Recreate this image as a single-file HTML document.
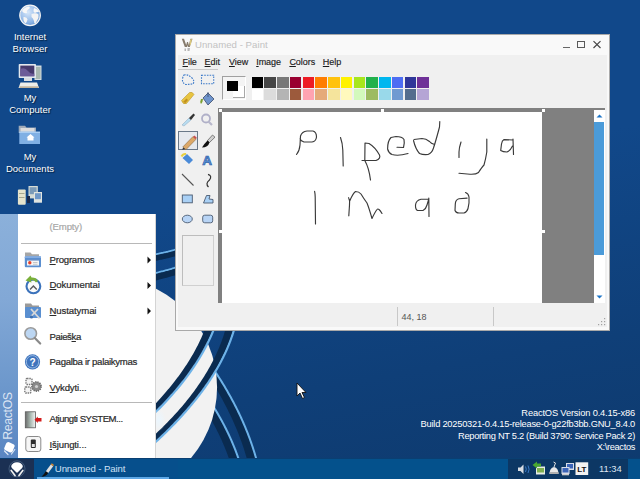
<!DOCTYPE html>
<html><head><meta charset="utf-8">
<style>
*{margin:0;padding:0;box-sizing:border-box}
html,body{width:640px;height:479px;overflow:hidden}
body{position:relative;font-family:"Liberation Sans",sans-serif;background:linear-gradient(170deg,#11488a 0%,#11488a 40%,#0f3f78 75%,#0e3a6e 100%)}
.abs{position:absolute}
.dlabel{position:absolute;color:#fff;font-size:9.5px;text-align:center;line-height:12px;text-shadow:1px 1px 1px #002040}
#paint{left:175px;top:34px;width:435px;height:297px}
#start{left:0;top:214px;width:156px;height:244px;background:#fff}
#taskbar{left:0;top:458px;width:640px;height:21px;background:#04518c;box-shadow:inset 0 1px 0 #0a3f72}
.mi{position:absolute;left:49px;font-size:9.5px;color:#222;line-height:12px}
.wtxt{position:absolute;right:5px;color:#fff;font-size:9.3px;line-height:12px;text-align:right;white-space:nowrap}
#paint .ttl{position:absolute;left:20px;top:5px;font-size:9.6px;color:#c2c2c2;white-space:nowrap;line-height:12px;letter-spacing:0.05px}
.menubar{position:absolute;left:3px;top:20.5px;width:429px;height:15px;background:#f0f0f0}
.menubar span{position:absolute;top:1.5px;font-size:9px;color:#1a1a1a;line-height:12px;white-space:nowrap;letter-spacing:-0.05px;-webkit-text-stroke:0.15px #1a1a1a}
#paint{background:#f9f9f9;box-shadow:inset 0 0 0 1px rgba(40,40,40,0.38)}
#paint .body{position:absolute;left:3px;top:20.5px;width:429px;height:272.5px;background:#f0f0f0}
.sw{position:absolute;width:11.6px;height:11.4px}
.status{position:absolute;left:3px;top:270.6px;width:428.5px;height:22.5px;background:#f0f0f0}
#start .side{position:absolute;left:0;top:0;width:17.5px;height:244px;background:linear-gradient(180deg,#8bb0da 0%,#82a8d6 35%,#6d98cc 70%,#5a86c2 100%)}
.smi{position:absolute;left:49.5px;font-size:9.6px;color:#2a2a2a;line-height:12px;white-space:nowrap;-webkit-text-stroke:0.2px currentColor}
.smi u{text-decoration-thickness:1px;text-underline-offset:1px}
.rtxt{left:-16px;top:194.3px;width:48px;height:16px;color:rgba(236,242,250,0.88);font-size:12.3px;line-height:16px;transform:rotate(-90deg);transform-origin:24px 8px;letter-spacing:-0.35px;white-space:nowrap;text-align:center}
.tbt{left:54.8px;top:4.5px;font-size:9.6px;color:#cfe2f6;letter-spacing:-0.1px;white-space:nowrap;line-height:12px}
.clk{left:599px;top:4.5px;font-size:9.4px;color:#dfe8f2;white-space:nowrap;line-height:12px}
</style></head><body>

<!-- wallpaper shapes -->
<svg id="wall" class="abs" style="left:0;top:0" width="640" height="479" viewBox="0 0 640 479">
<path d="M192.60,353.74 L193.78,355.30 L194.94,356.84 L196.09,358.38 L197.23,359.93 L198.36,361.47 L199.48,363.01 L200.59,364.55 L201.69,366.09 L202.77,367.63 L203.85,369.17 L204.91,370.71 L205.97,372.25 L207.01,373.79 L208.03,375.34 L209.03,376.89 L210.02,378.44 L210.99,380.00 L211.96,381.55 L212.91,383.10 L213.86,384.65 L214.79,386.20 L215.71,387.75 L216.62,389.30 L217.52,390.85 L218.41,392.39 L219.29,393.94 L220.15,395.49 L221.01,397.03 L221.85,398.58 L222.69,400.12 L223.51,401.67 L224.32,403.21 L225.13,404.75 L225.93,406.29 L226.72,407.82 L227.50,409.36 L228.27,410.89 L229.02,412.43 L229.77,413.96 L230.51,415.50 L231.23,417.03 L231.95,418.56 L232.65,420.09 L233.34,421.63 L234.02,423.16 L234.69,424.69 L235.35,426.22 L236.00,427.75 L236.64,429.28 L237.27,430.80 L237.89,432.33 L238.49,433.86 L239.09,435.39 L239.67,436.91 L240.24,438.44 L240.81,439.97 L241.36,441.49 L241.90,443.02 L242.43,444.54 L242.95,446.06 L243.46,447.59 L243.96,449.11 L244.45,450.63 L244.92,452.15 L245.39,453.67 L245.85,455.19 L246.29,456.71 L246.73,458.23 L247.15,459.75 L247.57,461.27 L247.98,462.78 L248.39,464.30 L248.78,465.81 L249.17,467.33 L249.54,468.84 L249.90,470.35 L250.25,471.87 L250.60,473.38 L250.93,474.92 L259.04,473.15 L258.70,471.58 L258.34,470.01 L257.98,468.45 L257.61,466.88 L257.22,465.32 L256.82,463.75 L256.41,462.18 L256.00,460.62 L255.57,459.05 L255.13,457.48 L254.67,455.92 L254.21,454.35 L253.74,452.78 L253.26,451.22 L252.76,449.65 L252.25,448.08 L251.74,446.52 L251.21,444.95 L250.67,443.38 L250.12,441.82 L249.56,440.25 L248.99,438.68 L248.41,437.12 L247.82,435.55 L247.21,433.98 L246.60,432.41 L245.97,430.85 L245.33,429.28 L244.69,427.71 L244.03,426.15 L243.36,424.58 L242.68,423.01 L241.99,421.45 L241.29,419.88 L240.57,418.31 L239.85,416.74 L239.12,415.18 L238.37,413.61 L237.61,412.04 L236.85,410.47 L236.07,408.91 L235.28,407.34 L234.48,405.77 L233.67,404.20 L232.84,402.64 L232.01,401.07 L231.17,399.50 L230.31,397.93 L229.45,396.37 L228.57,394.80 L227.68,393.23 L226.79,391.66 L225.88,390.10 L224.96,388.53 L224.03,386.96 L223.08,385.39 L222.13,383.82 L221.17,382.26 L220.19,380.69 L219.21,379.12 L218.21,377.55 L217.20,375.98 L216.18,374.42 L215.16,372.85 L214.12,371.28 L213.06,369.71 L212.00,368.14 L210.93,366.58 L209.85,365.01 L208.75,363.44 L207.64,361.87 L206.53,360.30 L205.40,358.74 L204.26,357.17 L203.11,355.60 L201.95,354.03 L200.78,352.46 L199.60,350.89 L198.41,349.32Z" fill="#0a2b50"/><path d="M198.17,349.51 L199.36,351.07 L200.54,352.64 L201.71,354.21 L202.87,355.78 L204.02,357.34 L205.16,358.91 L206.28,360.48 L207.40,362.05 L208.50,363.61 L209.60,365.18 L210.68,366.75 L211.75,368.31 L212.82,369.88 L213.87,371.45 L214.90,373.01 L215.93,374.58 L216.95,376.15 L217.96,377.71 L218.95,379.28 L219.94,380.85 L220.91,382.41 L221.87,383.98 L222.83,385.55 L223.77,387.11 L224.70,388.68 L225.62,390.25 L226.53,391.81 L227.42,393.38 L228.31,394.95 L229.19,396.51 L230.05,398.08 L230.90,399.64 L231.75,401.21 L232.58,402.78 L233.40,404.34 L234.21,405.91 L235.01,407.47 L235.80,409.04 L236.58,410.61 L237.34,412.17 L238.10,413.74 L238.84,415.30 L239.58,416.87 L240.30,418.44 L241.01,420.00 L241.71,421.57 L242.40,423.13 L243.08,424.70 L243.75,426.26 L244.41,427.83 L245.06,429.39 L245.69,430.96 L246.32,432.52 L246.93,434.09 L247.54,435.66 L248.13,437.22 L248.71,438.79 L249.28,440.35 L249.84,441.92 L250.39,443.48 L250.93,445.05 L251.45,446.61 L251.97,448.18 L252.47,449.74 L252.97,451.31 L253.45,452.87 L253.93,454.44 L254.39,456.00 L254.84,457.56 L255.28,459.13 L255.71,460.69 L256.12,462.26 L256.53,463.82 L256.93,465.39 L257.31,466.95 L257.69,468.52 L258.05,470.08 L258.41,471.65 L258.75,473.21 L260.70,472.79 L260.36,471.21 L260.00,469.63 L259.64,468.06 L259.26,466.48 L258.87,464.90 L258.47,463.33 L258.06,461.75 L257.64,460.17 L257.20,458.59 L256.76,457.02 L256.31,455.44 L255.84,453.86 L255.37,452.29 L254.88,450.71 L254.38,449.13 L253.87,447.56 L253.35,445.98 L252.82,444.40 L252.28,442.83 L251.72,441.25 L251.16,439.67 L250.59,438.10 L250.00,436.52 L249.40,434.94 L248.80,433.37 L248.18,431.79 L247.55,430.21 L246.91,428.64 L246.26,427.06 L245.59,425.48 L244.92,423.91 L244.24,422.33 L243.54,420.75 L242.84,419.18 L242.12,417.60 L241.39,416.03 L240.65,414.45 L239.90,412.87 L239.14,411.30 L238.37,409.72 L237.59,408.15 L236.79,406.57 L235.99,404.99 L235.17,403.42 L234.35,401.84 L233.51,400.27 L232.66,398.69 L231.80,397.12 L230.93,395.54 L230.05,393.97 L229.16,392.39 L228.26,390.81 L227.35,389.24 L226.42,387.66 L225.48,386.09 L224.54,384.51 L223.58,382.94 L222.61,381.36 L221.63,379.79 L220.64,378.21 L219.64,376.64 L218.63,375.06 L217.61,373.49 L216.57,371.91 L215.53,370.34 L214.47,368.76 L213.41,367.19 L212.33,365.61 L211.24,364.04 L210.14,362.46 L209.03,360.89 L207.91,359.31 L206.78,357.74 L205.64,356.17 L204.48,354.59 L203.32,353.02 L202.14,351.44 L200.95,349.87 L199.76,348.29Z" fill="#6db2e8"/><path d="M190.74,387.91 L191.56,389.05 L192.37,390.17 L193.17,391.29 L193.96,392.42 L194.75,393.54 L195.53,394.66 L196.30,395.78 L197.06,396.91 L197.82,398.03 L198.57,399.15 L199.31,400.27 L200.05,401.39 L200.78,402.51 L201.50,403.63 L202.21,404.75 L202.93,405.86 L203.64,406.98 L204.34,408.09 L205.03,409.20 L205.72,410.32 L206.40,411.43 L207.07,412.54 L207.74,413.65 L208.40,414.76 L209.05,415.87 L209.70,416.98 L210.33,418.10 L210.96,419.21 L211.59,420.31 L212.21,421.42 L212.82,422.53 L213.42,423.64 L214.02,424.75 L214.61,425.86 L215.19,426.96 L215.76,428.07 L216.33,429.18 L216.89,430.28 L217.45,431.39 L218.00,432.50 L218.54,433.60 L219.07,434.71 L219.60,435.81 L220.12,436.91 L220.63,438.02 L221.14,439.12 L221.64,440.22 L222.13,441.33 L222.61,442.43 L223.09,443.53 L223.56,444.63 L224.03,445.73 L224.49,446.83 L224.94,447.93 L225.38,449.03 L225.82,450.13 L226.25,451.23 L226.67,452.33 L227.09,453.43 L227.50,454.53 L227.90,455.63 L228.30,456.72 L228.69,457.82 L229.07,458.92 L229.44,460.01 L229.81,461.11 L230.18,462.20 L230.55,463.29 L230.91,464.38 L231.26,465.48 L231.60,466.57 L231.94,467.66 L232.27,468.75 L232.59,469.84 L232.91,470.93 L233.22,472.02 L233.52,473.11 L233.82,474.20 L234.12,475.31 L242.14,473.18 L241.83,472.04 L241.52,470.91 L241.21,469.77 L240.89,468.64 L240.56,467.50 L240.22,466.37 L239.87,465.23 L239.52,464.09 L239.17,462.96 L238.80,461.82 L238.43,460.69 L238.05,459.55 L237.66,458.42 L237.27,457.28 L236.87,456.15 L236.47,455.01 L236.05,453.87 L235.63,452.74 L235.20,451.60 L234.77,450.47 L234.33,449.33 L233.88,448.20 L233.42,447.06 L232.96,445.92 L232.49,444.79 L232.02,443.65 L231.53,442.52 L231.04,441.38 L230.54,440.24 L230.04,439.11 L229.53,437.97 L229.01,436.84 L228.48,435.70 L227.95,434.56 L227.41,433.43 L226.87,432.29 L226.31,431.16 L225.75,430.02 L225.19,428.88 L224.61,427.75 L224.03,426.61 L223.44,425.48 L222.85,424.34 L222.25,423.20 L221.64,422.07 L221.02,420.93 L220.40,419.79 L219.77,418.66 L219.13,417.52 L218.49,416.38 L217.84,415.25 L217.18,414.11 L216.51,412.98 L215.84,411.84 L215.16,410.70 L214.48,409.57 L213.78,408.43 L213.08,407.29 L212.38,406.16 L211.66,405.02 L210.94,403.88 L210.21,402.75 L209.48,401.61 L208.74,400.47 L207.99,399.34 L207.23,398.20 L206.47,397.06 L205.70,395.93 L204.92,394.79 L204.14,393.65 L203.35,392.51 L202.55,391.38 L201.74,390.24 L200.93,389.10 L200.11,387.97 L199.29,386.83 L198.46,385.69 L197.62,384.56 L196.77,383.42Z" fill="#0a2b50"/><path d="M196.53,383.60 L197.37,384.73 L198.21,385.87 L199.05,387.01 L199.87,388.14 L200.69,389.28 L201.50,390.41 L202.30,391.55 L203.10,392.69 L203.89,393.82 L204.67,394.96 L205.45,396.09 L206.22,397.23 L206.98,398.37 L207.74,399.50 L208.48,400.64 L209.23,401.77 L209.96,402.91 L210.69,404.04 L211.41,405.18 L212.12,406.31 L212.83,407.45 L213.53,408.59 L214.22,409.72 L214.90,410.86 L215.58,411.99 L216.25,413.13 L216.92,414.26 L217.58,415.40 L218.23,416.53 L218.87,417.67 L219.51,418.80 L220.13,419.94 L220.76,421.07 L221.37,422.21 L221.98,423.34 L222.58,424.48 L223.18,425.61 L223.76,426.75 L224.34,427.88 L224.92,429.02 L225.48,430.15 L226.04,431.29 L226.60,432.42 L227.14,433.56 L227.68,434.69 L228.21,435.83 L228.74,436.96 L229.26,438.10 L229.77,439.23 L230.27,440.37 L230.77,441.50 L231.26,442.63 L231.74,443.77 L232.21,444.90 L232.68,446.04 L233.15,447.17 L233.60,448.31 L234.05,449.44 L234.49,450.58 L234.92,451.71 L235.35,452.84 L235.77,453.98 L236.18,455.11 L236.59,456.25 L236.99,457.38 L237.38,458.51 L237.77,459.65 L238.14,460.78 L238.52,461.92 L238.88,463.05 L239.24,464.18 L239.59,465.32 L239.93,466.45 L240.27,467.59 L240.60,468.72 L240.92,469.85 L241.24,470.99 L241.54,472.12 L241.85,473.26 L243.78,472.74 L243.48,471.60 L243.16,470.46 L242.84,469.31 L242.52,468.17 L242.19,467.02 L241.85,465.88 L241.50,464.73 L241.15,463.59 L240.79,462.44 L240.42,461.30 L240.04,460.15 L239.66,459.01 L239.27,457.87 L238.88,456.72 L238.47,455.58 L238.06,454.43 L237.65,453.29 L237.22,452.14 L236.79,451.00 L236.36,449.86 L235.91,448.71 L235.46,447.57 L235.00,446.42 L234.53,445.28 L234.06,444.13 L233.58,442.99 L233.09,441.85 L232.60,440.70 L232.10,439.56 L231.59,438.41 L231.08,437.27 L230.56,436.13 L230.03,434.98 L229.49,433.84 L228.95,432.70 L228.40,431.55 L227.84,430.41 L227.28,429.26 L226.71,428.12 L226.13,426.98 L225.54,425.83 L224.95,424.69 L224.35,423.55 L223.75,422.40 L223.13,421.26 L222.51,420.12 L221.89,418.97 L221.25,417.83 L220.61,416.69 L219.96,415.54 L219.31,414.40 L218.65,413.26 L217.98,412.11 L217.30,410.97 L216.62,409.83 L215.93,408.68 L215.23,407.54 L214.53,406.40 L213.82,405.25 L213.10,404.11 L212.37,402.97 L211.64,401.83 L210.90,400.68 L210.16,399.54 L209.40,398.40 L208.64,397.25 L207.88,396.11 L207.10,394.97 L206.32,393.83 L205.54,392.68 L204.74,391.54 L203.94,390.40 L203.13,389.26 L202.31,388.11 L201.49,386.97 L200.66,385.83 L199.82,384.69 L198.98,383.54 L198.13,382.40Z" fill="#6db2e8"/>
<ellipse cx="103.36" cy="387.28" rx="113.7" ry="111.25" fill="#f2f2f2"/>
<path d="M218.97,306.71 L218.64,308.20 L218.29,309.70 L217.93,311.21 L217.55,312.71 L217.15,314.22 L216.74,315.72 L216.31,317.23 L215.86,318.73 L215.40,320.24 L214.92,321.74 L214.42,323.24 L213.91,324.75 L213.38,326.25 L212.83,327.75 L212.27,329.26 L211.69,330.76 L211.09,332.26 L210.46,333.75 L209.81,335.24 L209.14,336.74 L208.46,338.23 L207.76,339.72 L207.05,341.21 L206.32,342.69 L205.57,344.18 L204.80,345.67 L204.02,347.16 L203.23,348.64 L202.42,350.13 L201.59,351.61 L200.74,353.10 L199.88,354.58 L199.00,356.06 L198.11,357.54 L197.20,359.03 L196.27,360.51 L195.33,361.99 L194.37,363.47 L193.40,364.94 L192.41,366.42 L191.40,367.90 L190.38,369.38 L189.34,370.86 L188.28,372.33 L187.21,373.81 L186.12,375.28 L185.02,376.76 L183.90,378.23 L182.76,379.71 L181.61,381.18 L180.44,382.65 L179.25,384.12 L178.05,385.60 L176.84,387.07 L175.60,388.54 L174.35,390.01 L173.09,391.48 L171.80,392.95 L170.51,394.42 L169.19,395.89 L167.86,397.36 L166.52,398.82 L165.15,400.29 L163.78,401.76 L162.38,403.23 L160.97,404.69 L159.54,406.16 L158.11,407.64 L156.66,409.11 L155.20,410.59 L153.72,412.07 L152.23,413.55 L150.71,415.03 L149.19,416.50 L147.64,417.98 L146.08,419.46 L144.51,420.94 L142.91,422.41 L141.31,423.89 L143.00,425.73 L144.61,424.25 L146.21,422.76 L147.80,421.28 L149.37,419.79 L150.92,418.30 L152.46,416.82 L153.98,415.33 L155.49,413.84 L156.98,412.35 L158.45,410.86 L159.90,409.38 L161.35,407.89 L162.78,406.41 L164.21,404.94 L165.61,403.46 L167.00,401.98 L168.37,400.50 L169.73,399.02 L171.07,397.54 L172.39,396.06 L173.70,394.58 L174.99,393.10 L176.27,391.61 L177.53,390.13 L178.77,388.65 L180.00,387.16 L181.21,385.68 L182.41,384.19 L183.59,382.70 L184.75,381.22 L185.90,379.73 L187.03,378.24 L188.15,376.75 L189.24,375.26 L190.33,373.77 L191.39,372.28 L192.44,370.78 L193.48,369.29 L194.50,367.80 L195.50,366.30 L196.48,364.81 L197.45,363.31 L198.40,361.81 L199.34,360.32 L200.26,358.82 L201.17,357.32 L202.05,355.82 L202.93,354.31 L203.78,352.81 L204.62,351.31 L205.44,349.80 L206.25,348.30 L207.04,346.79 L207.81,345.28 L208.57,343.78 L209.31,342.27 L210.03,340.76 L210.74,339.25 L211.43,337.73 L212.11,336.22 L212.77,334.71 L213.41,333.19 L214.01,331.67 L214.60,330.14 L215.17,328.62 L215.73,327.09 L216.27,325.57 L216.79,324.04 L217.29,322.51 L217.78,320.99 L218.25,319.46 L218.71,317.93 L219.14,316.40 L219.56,314.87 L219.97,313.34 L220.36,311.81 L220.73,310.28 L221.08,308.74 L221.41,307.24Z" fill="#6db2e8"/><path d="M212.23,305.23 L211.91,306.68 L211.58,308.12 L211.23,309.55 L210.87,310.99 L210.49,312.42 L210.09,313.86 L209.68,315.30 L209.26,316.73 L208.81,318.17 L208.35,319.61 L207.88,321.05 L207.39,322.49 L206.88,323.92 L206.36,325.36 L205.82,326.80 L205.26,328.24 L204.69,329.68 L204.12,331.13 L203.54,332.58 L202.94,334.03 L202.32,335.48 L201.69,336.93 L201.04,338.39 L200.37,339.84 L199.69,341.29 L198.99,342.75 L198.28,344.20 L197.55,345.66 L196.80,347.12 L196.03,348.57 L195.25,350.03 L194.46,351.49 L193.64,352.95 L192.81,354.41 L191.97,355.87 L191.10,357.33 L190.22,358.79 L189.33,360.26 L188.41,361.72 L187.48,363.18 L186.54,364.65 L185.58,366.11 L184.60,367.58 L183.60,369.05 L182.59,370.51 L181.56,371.98 L180.52,373.45 L179.46,374.92 L178.38,376.38 L177.28,377.85 L176.17,379.32 L175.04,380.79 L173.90,382.26 L172.74,383.74 L171.56,385.21 L170.37,386.68 L169.16,388.15 L167.93,389.62 L166.69,391.10 L165.43,392.57 L164.15,394.05 L162.86,395.52 L161.55,397.00 L160.22,398.47 L158.88,399.95 L157.52,401.42 L156.14,402.90 L154.74,404.37 L153.32,405.83 L151.88,407.30 L150.42,408.76 L148.95,410.23 L147.46,411.69 L145.96,413.16 L144.44,414.62 L142.90,416.09 L141.34,417.56 L139.77,419.02 L138.18,420.49 L141.51,424.11 L143.12,422.63 L144.71,421.16 L146.29,419.68 L147.85,418.20 L149.40,416.72 L150.92,415.24 L152.44,413.76 L153.93,412.28 L155.41,410.80 L156.88,409.32 L158.32,407.84 L159.76,406.37 L161.19,404.90 L162.60,403.43 L164.00,401.96 L165.38,400.49 L166.74,399.03 L168.09,397.56 L169.42,396.09 L170.73,394.62 L172.03,393.14 L173.32,391.67 L174.58,390.20 L175.83,388.73 L177.07,387.26 L178.29,385.78 L179.49,384.31 L180.68,382.84 L181.85,381.36 L183.00,379.89 L184.14,378.41 L185.26,376.94 L186.36,375.46 L187.45,373.98 L188.53,372.50 L189.58,371.03 L190.62,369.55 L191.65,368.07 L192.66,366.59 L193.65,365.11 L194.63,363.63 L195.59,362.15 L196.53,360.66 L197.46,359.18 L198.37,357.70 L199.26,356.21 L200.14,354.73 L201.00,353.24 L201.85,351.76 L202.68,350.27 L203.49,348.78 L204.29,347.29 L205.07,345.80 L205.84,344.31 L206.59,342.82 L207.32,341.33 L208.03,339.84 L208.73,338.35 L209.42,336.86 L210.08,335.36 L210.73,333.87 L211.37,332.37 L211.97,330.87 L212.55,329.36 L213.11,327.86 L213.66,326.35 L214.19,324.85 L214.70,323.34 L215.20,321.83 L215.68,320.33 L216.15,318.82 L216.59,317.31 L217.03,315.80 L217.44,314.30 L217.84,312.79 L218.22,311.28 L218.58,309.77 L218.93,308.26 L219.26,306.77Z" fill="#0a2b50"/><path d="M237.26,306.41 L237.02,308.28 L236.76,310.17 L236.47,312.06 L236.16,313.94 L235.82,315.83 L235.45,317.72 L235.06,319.61 L234.65,321.49 L234.21,323.38 L233.74,325.27 L233.25,327.15 L232.74,329.04 L232.20,330.92 L231.62,332.80 L231.00,334.68 L230.36,336.55 L229.69,338.43 L229.00,340.30 L228.28,342.17 L227.54,344.04 L226.77,345.91 L225.98,347.78 L225.16,349.65 L224.32,351.51 L223.45,353.38 L222.56,355.24 L221.65,357.10 L220.71,358.97 L219.74,360.83 L218.75,362.69 L217.74,364.55 L216.70,366.40 L215.63,368.26 L214.54,370.12 L213.43,371.97 L212.29,373.83 L211.13,375.68 L209.94,377.53 L208.73,379.39 L207.49,381.24 L206.23,383.09 L204.94,384.94 L203.63,386.79 L202.30,388.63 L200.94,390.48 L199.56,392.33 L198.15,394.17 L196.71,396.02 L195.26,397.86 L193.77,399.71 L192.27,401.55 L190.74,403.39 L189.18,405.23 L187.61,407.08 L186.02,408.94 L184.41,410.79 L182.77,412.65 L181.11,414.50 L179.42,416.36 L177.71,418.21 L175.98,420.06 L174.22,421.92 L172.43,423.77 L170.62,425.62 L168.79,427.48 L166.93,429.33 L165.04,431.18 L163.13,433.03 L161.20,434.88 L159.24,436.74 L157.26,438.59 L155.25,440.44 L153.22,442.29 L151.16,444.14 L149.08,445.99 L146.98,447.84 L144.85,449.70 L142.69,451.55 L140.52,453.40 L142.14,455.30 L144.32,453.45 L146.48,451.59 L148.62,449.72 L150.74,447.86 L152.83,446.00 L154.90,444.14 L156.94,442.28 L158.96,440.42 L160.96,438.55 L162.93,436.69 L164.87,434.83 L166.79,432.97 L168.69,431.10 L170.56,429.24 L172.41,427.37 L174.23,425.51 L176.03,423.64 L177.80,421.77 L179.55,419.91 L181.27,418.04 L182.97,416.17 L184.64,414.30 L186.29,412.43 L187.92,410.56 L189.52,408.69 L191.10,406.83 L192.67,404.98 L194.22,403.12 L195.73,401.26 L197.23,399.40 L198.70,397.54 L200.15,395.67 L201.57,393.81 L202.96,391.95 L204.34,390.08 L205.68,388.22 L207.01,386.35 L208.31,384.48 L209.58,382.61 L210.83,380.74 L212.06,378.87 L213.26,376.99 L214.43,375.12 L215.58,373.24 L216.71,371.37 L217.81,369.49 L218.89,367.61 L219.94,365.73 L220.97,363.84 L221.97,361.96 L222.95,360.08 L223.90,358.19 L224.83,356.30 L225.73,354.41 L226.61,352.52 L227.46,350.63 L228.29,348.74 L229.09,346.84 L229.87,344.95 L230.62,343.05 L231.35,341.15 L232.05,339.25 L232.73,337.35 L233.38,335.44 L234.01,333.54 L234.60,331.63 L235.15,329.71 L235.67,327.80 L236.17,325.88 L236.64,323.96 L237.09,322.05 L237.51,320.13 L237.91,318.21 L238.28,316.29 L238.62,314.37 L238.94,312.45 L239.23,310.53 L239.50,308.61 L239.74,306.72Z" fill="#6db2e8"/><path d="M230.41,305.55 L230.18,307.37 L229.93,309.17 L229.66,310.97 L229.36,312.77 L229.03,314.57 L228.69,316.37 L228.32,318.17 L227.92,319.97 L227.50,321.77 L227.06,323.57 L226.59,325.37 L226.09,327.18 L225.58,328.98 L225.05,330.78 L224.51,332.60 L223.94,334.41 L223.35,336.22 L222.74,338.04 L222.10,339.86 L221.44,341.67 L220.75,343.49 L220.03,345.31 L219.30,347.13 L218.53,348.95 L217.75,350.78 L216.93,352.60 L216.10,354.43 L215.23,356.25 L214.35,358.08 L213.43,359.91 L212.50,361.74 L211.54,363.57 L210.55,365.40 L209.54,367.23 L208.50,369.07 L207.44,370.90 L206.35,372.73 L205.24,374.57 L204.10,376.41 L202.94,378.24 L201.75,380.08 L200.54,381.92 L199.30,383.76 L198.04,385.60 L196.75,387.44 L195.44,389.29 L194.10,391.13 L192.73,392.97 L191.35,394.82 L189.93,396.66 L188.49,398.51 L187.03,400.36 L185.54,402.20 L184.02,404.05 L182.46,405.88 L180.88,407.72 L179.28,409.55 L177.64,411.38 L175.99,413.22 L174.31,415.06 L172.60,416.89 L170.87,418.73 L169.11,420.56 L167.33,422.40 L165.53,424.24 L163.69,426.07 L161.84,427.91 L159.96,429.75 L158.05,431.59 L156.12,433.43 L154.17,435.26 L152.18,437.10 L150.18,438.94 L148.15,440.78 L146.09,442.62 L144.01,444.46 L141.90,446.29 L139.77,448.13 L137.60,449.97 L140.71,453.63 L142.89,451.78 L145.04,449.92 L147.17,448.07 L149.28,446.21 L151.36,444.36 L153.42,442.51 L155.45,440.66 L157.46,438.81 L159.45,436.95 L161.41,435.10 L163.34,433.25 L165.25,431.39 L167.14,429.54 L169.00,427.69 L170.83,425.83 L172.65,423.98 L174.43,422.12 L176.19,420.27 L177.93,418.41 L179.64,416.56 L181.33,414.70 L183.00,412.84 L184.63,410.99 L186.25,409.13 L187.84,407.27 L189.41,405.43 L190.97,403.58 L192.50,401.74 L194.01,399.89 L195.49,398.05 L196.95,396.20 L198.39,394.35 L199.80,392.50 L201.18,390.66 L202.54,388.81 L203.88,386.96 L205.19,385.11 L206.48,383.25 L207.74,381.40 L208.98,379.55 L210.19,377.69 L211.38,375.84 L212.55,373.98 L213.69,372.12 L214.80,370.27 L215.89,368.41 L216.96,366.55 L218.00,364.69 L219.02,362.83 L220.01,360.96 L220.97,359.10 L221.92,357.23 L222.83,355.37 L223.73,353.50 L224.60,351.63 L225.44,349.76 L226.26,347.89 L227.05,346.02 L227.82,344.15 L228.56,342.28 L229.28,340.40 L229.97,338.53 L230.64,336.65 L231.29,334.77 L231.91,332.89 L232.49,331.01 L233.03,329.12 L233.54,327.23 L234.04,325.34 L234.50,323.45 L234.94,321.56 L235.36,319.67 L235.75,317.78 L236.11,315.89 L236.45,313.99 L236.77,312.10 L237.06,310.21 L237.32,308.32 L237.55,306.45Z" fill="#0a2b50"/>
<path d="M119.01,261.56 L120.83,261.15 L122.69,260.74 L124.58,260.32 L126.49,259.90 L128.42,259.48 L130.35,259.05 L132.29,258.62 L134.23,258.19 L136.16,257.76 L138.08,257.34 L139.97,256.92 L141.84,256.51 L143.67,256.10 L145.46,255.70 L147.21,255.31 L148.90,254.94 L150.53,254.57 L152.09,254.22 L153.58,253.88 L155.00,253.56 L156.33,253.26 L157.56,252.99 L158.69,252.74 L159.75,252.51 L160.73,252.30 L161.65,252.10 L162.52,251.92 L163.34,251.74 L164.13,251.57 L164.89,251.40 L165.64,251.23 L166.39,251.06 L167.15,250.88 L167.93,250.69 L168.75,250.49 L169.62,250.26 L170.54,250.02 L171.52,249.75 L172.59,249.45 L173.75,249.13 L174.97,248.77 L176.25,248.39 L177.58,247.99 L178.96,247.57 L180.37,247.13 L181.83,246.68 L183.31,246.21 L184.82,245.73 L186.36,245.23 L187.92,244.73 L189.49,244.22 L191.07,243.71 L192.66,243.20 L194.25,242.68 L195.84,242.16 L197.42,241.65 L199.00,241.14 L200.56,240.64 L202.10,240.15 L203.62,239.66 L204.26,241.67 L202.74,242.15 L201.20,242.64 L199.64,243.14 L198.07,243.65 L196.49,244.16 L194.90,244.68 L193.31,245.19 L191.72,245.71 L190.13,246.22 L188.56,246.73 L187.00,247.23 L185.46,247.73 L183.95,248.21 L182.46,248.68 L181.00,249.14 L179.57,249.58 L178.19,250.00 L176.85,250.40 L175.56,250.79 L174.33,251.14 L173.16,251.47 L172.08,251.77 L171.08,252.05 L170.15,252.29 L169.27,252.52 L168.44,252.73 L167.64,252.92 L166.87,253.11 L166.11,253.28 L165.34,253.45 L164.57,253.62 L163.78,253.79 L162.96,253.97 L162.09,254.15 L161.17,254.35 L160.19,254.56 L159.14,254.79 L158.01,255.04 L156.78,255.31 L155.46,255.61 L154.04,255.93 L152.55,256.27 L150.99,256.62 L149.35,256.99 L147.66,257.36 L145.92,257.75 L144.13,258.15 L142.29,258.56 L140.43,258.97 L138.53,259.39 L136.62,259.81 L134.69,260.24 L132.75,260.67 L130.81,261.10 L128.87,261.53 L126.94,261.95 L125.03,262.37 L123.15,262.79 L121.29,263.20 L119.47,263.61Z" fill="#6db2e8"/><path d="M119.40,263.32 L121.22,262.91 L123.08,262.50 L124.97,262.08 L126.88,261.66 L128.80,261.23 L130.74,260.80 L132.68,260.38 L134.62,259.95 L136.55,259.52 L138.47,259.10 L140.36,258.68 L142.23,258.26 L144.06,257.86 L145.85,257.46 L147.60,257.07 L149.29,256.69 L150.92,256.33 L152.48,255.98 L153.98,255.64 L155.39,255.32 L156.72,255.02 L157.95,254.75 L159.08,254.50 L160.13,254.27 L161.11,254.06 L162.03,253.86 L162.89,253.68 L163.72,253.50 L164.51,253.33 L165.28,253.16 L166.04,252.99 L166.80,252.81 L167.57,252.63 L168.37,252.44 L169.20,252.23 L170.07,252.00 L171.00,251.76 L172.00,251.49 L173.08,251.19 L174.24,250.86 L175.48,250.50 L176.77,250.12 L178.10,249.71 L179.49,249.29 L180.91,248.85 L182.37,248.39 L183.85,247.92 L185.37,247.44 L186.91,246.95 L188.47,246.45 L190.04,245.94 L191.62,245.42 L193.21,244.91 L194.80,244.39 L196.39,243.88 L197.98,243.36 L199.55,242.86 L201.11,242.35 L202.65,241.86 L204.17,241.38 L205.83,246.62 L204.32,247.10 L202.79,247.59 L201.24,248.09 L199.67,248.60 L198.09,249.11 L196.50,249.62 L194.91,250.14 L193.32,250.66 L191.73,251.17 L190.16,251.68 L188.59,252.18 L187.05,252.68 L185.52,253.17 L184.02,253.64 L182.54,254.10 L181.11,254.55 L179.70,254.98 L178.34,255.39 L177.02,255.78 L175.76,256.14 L174.57,256.48 L173.46,256.79 L172.43,257.07 L171.46,257.32 L170.55,257.56 L169.69,257.78 L168.86,257.98 L168.05,258.17 L167.26,258.35 L166.47,258.53 L165.68,258.70 L164.87,258.88 L164.04,259.05 L163.18,259.24 L162.26,259.43 L161.29,259.64 L160.25,259.87 L159.13,260.12 L157.92,260.39 L156.61,260.68 L155.19,261.00 L153.69,261.34 L152.12,261.69 L150.49,262.06 L148.79,262.44 L147.05,262.83 L145.25,263.23 L143.42,263.63 L141.55,264.05 L139.66,264.47 L137.74,264.89 L135.81,265.32 L133.87,265.75 L131.93,266.17 L129.99,266.60 L128.07,267.03 L126.16,267.45 L124.27,267.87 L122.42,268.28 L120.60,268.68Z" fill="#0a2b50"/><path d="M118.69,282.18 L120.51,281.68 L122.36,281.17 L124.25,280.66 L126.16,280.14 L128.09,279.62 L130.02,279.09 L131.96,278.56 L133.90,278.03 L135.83,277.51 L137.75,276.99 L139.64,276.47 L141.51,275.96 L143.34,275.47 L145.14,274.98 L146.88,274.50 L148.57,274.04 L150.21,273.60 L151.77,273.17 L153.27,272.76 L154.69,272.38 L156.02,272.01 L157.25,271.68 L158.39,271.38 L159.45,271.10 L160.43,270.85 L161.36,270.61 L162.23,270.39 L163.05,270.18 L163.85,269.97 L164.62,269.77 L165.38,269.58 L166.13,269.37 L166.90,269.17 L167.69,268.95 L168.51,268.72 L169.38,268.47 L170.30,268.20 L171.29,267.91 L172.36,267.58 L173.52,267.22 L174.75,266.84 L176.03,266.43 L177.36,266.00 L178.74,265.55 L180.16,265.09 L181.62,264.61 L183.10,264.11 L184.62,263.61 L186.16,263.09 L187.71,262.56 L189.28,262.03 L190.87,261.50 L192.46,260.96 L194.05,260.42 L195.64,259.88 L197.22,259.34 L198.80,258.81 L200.36,258.28 L201.90,257.76 L203.42,257.26 L204.08,259.25 L202.57,259.76 L201.03,260.27 L199.47,260.80 L197.89,261.33 L196.31,261.87 L194.72,262.40 L193.13,262.94 L191.54,263.48 L189.96,264.02 L188.38,264.55 L186.83,265.08 L185.29,265.60 L183.77,266.10 L182.28,266.60 L180.82,267.08 L179.40,267.55 L178.01,268.00 L176.67,268.43 L175.38,268.84 L174.14,269.23 L172.97,269.59 L171.90,269.92 L170.89,270.21 L169.96,270.49 L169.08,270.74 L168.25,270.97 L167.45,271.19 L166.67,271.40 L165.91,271.61 L165.15,271.81 L164.37,272.01 L163.58,272.21 L162.75,272.42 L161.88,272.64 L160.96,272.88 L159.98,273.14 L158.93,273.41 L157.79,273.71 L156.57,274.04 L155.24,274.40 L153.82,274.79 L152.33,275.20 L150.76,275.62 L149.13,276.07 L147.43,276.53 L145.69,277.00 L143.90,277.49 L142.06,277.99 L140.20,278.50 L138.30,279.01 L136.39,279.54 L134.45,280.06 L132.52,280.59 L130.57,281.12 L128.64,281.64 L126.71,282.17 L124.80,282.69 L122.91,283.20 L121.06,283.71 L119.24,284.20Z" fill="#6db2e8"/><path d="M119.16,283.91 L120.98,283.42 L122.84,282.91 L124.72,282.40 L126.63,281.88 L128.56,281.35 L130.50,280.83 L132.44,280.30 L134.38,279.77 L136.31,279.25 L138.22,278.72 L140.12,278.21 L141.98,277.70 L143.82,277.20 L145.61,276.71 L147.35,276.24 L149.05,275.78 L150.68,275.33 L152.25,274.91 L153.74,274.50 L155.16,274.11 L156.49,273.75 L157.71,273.42 L158.85,273.12 L159.90,272.85 L160.89,272.59 L161.81,272.35 L162.67,272.13 L163.50,271.92 L164.30,271.72 L165.07,271.52 L165.83,271.32 L166.60,271.11 L167.37,270.90 L168.17,270.68 L169.00,270.45 L169.88,270.20 L170.81,269.93 L171.81,269.63 L172.89,269.30 L174.05,268.94 L175.29,268.56 L176.58,268.15 L177.92,267.72 L179.30,267.27 L180.72,266.80 L182.18,266.32 L183.67,265.82 L185.19,265.31 L186.73,264.79 L188.29,264.27 L189.86,263.74 L191.44,263.20 L193.03,262.66 L194.63,262.12 L196.22,261.58 L197.80,261.05 L199.37,260.51 L200.93,259.99 L202.47,259.47 L203.99,258.97 L206.01,265.03 L204.50,265.54 L202.97,266.05 L201.42,266.58 L199.85,267.11 L198.27,267.64 L196.68,268.18 L195.09,268.72 L193.50,269.26 L191.91,269.80 L190.34,270.33 L188.77,270.86 L187.23,271.38 L185.70,271.89 L184.20,272.39 L182.73,272.88 L181.29,273.35 L179.89,273.80 L178.53,274.24 L177.21,274.66 L175.95,275.06 L174.76,275.42 L173.65,275.76 L172.62,276.07 L171.66,276.35 L170.75,276.61 L169.88,276.85 L169.05,277.08 L168.25,277.30 L167.46,277.51 L166.68,277.71 L165.89,277.91 L165.09,278.12 L164.26,278.33 L163.40,278.55 L162.49,278.79 L161.52,279.04 L160.48,279.31 L159.36,279.61 L158.15,279.93 L156.84,280.29 L155.43,280.67 L153.93,281.08 L152.36,281.51 L150.73,281.95 L149.04,282.41 L147.29,282.89 L145.50,283.38 L143.66,283.88 L141.80,284.38 L139.90,284.90 L137.99,285.42 L136.06,285.95 L134.12,286.47 L132.18,287.00 L130.24,287.53 L128.31,288.05 L126.40,288.57 L124.52,289.09 L122.66,289.59 L120.84,290.09Z" fill="#0a2b50"/>
<defs><radialGradient id="glw"><stop offset="0" stop-color="#eaf6ff" stop-opacity="0.95"/><stop offset="1" stop-color="#eaf6ff" stop-opacity="0"/></radialGradient></defs><ellipse cx="159" cy="420" rx="7" ry="11" fill="url(#glw)"/>
</svg>

<!-- desktop icons -->
<svg class="abs" style="left:0;top:0" width="60" height="214" viewBox="0 0 60 214">
  <defs>
    <radialGradient id="gl" cx="0.4" cy="0.35" r="0.7"><stop offset="0" stop-color="#d8e8fa"/><stop offset="0.7" stop-color="#8fb6e6"/><stop offset="1" stop-color="#6a98d0"/></radialGradient>
  </defs>
  <circle cx="30.05" cy="15.35" r="10.3" fill="url(#gl)" stroke="#f4f4f4" stroke-width="1.2"/>
  <path d="M22,11 Q24,7 29,6.5 Q31,8 28,9.5 Q26,11 27,13 Q24,14 22,11Z" fill="#f8f8f8"/>
  <path d="M34,8 Q38,9 39,12 Q36,11.5 35,13 Q33,12 33.5,10Z" fill="#f8f8f8"/>
  <path d="M31.5,14 Q36,12.5 38.5,14.5 Q39,18 37,20.5 L35.5,23.5 Q34,24 34,21 Q33,18 31.5,17Z" fill="#f4f4f4"/>
  <path d="M23.5,17 Q27,16.5 27.5,19.5 Q27,22 25.5,23.5 Q23,21 23.5,17Z" fill="#f4f4f4"/>
  <!-- computer -->
  <rect x="34.5" y="65.5" width="7" height="14.5" fill="#d4dce0"/>
  <rect x="35.5" y="67" width="5" height="12" fill="#a8b8b0"/>
  <rect x="18.7" y="64" width="17.3" height="14" rx="0.8" fill="#e2e8ee"/>
  <rect x="20.3" y="65.6" width="14" height="10.6" fill="#463a6c"/>
  <path d="M20.3,69 Q25,67 28,71 Q30.5,74.5 34.3,73.5 L34.3,76.2 L20.3,76.2Z" fill="#6c5c98"/>
  <rect x="24" y="78" width="8" height="3" fill="#d8dce0"/>
  <path d="M20.5,82.5 L37,82.5 L39,88 L18.5,88Z" fill="#eeeeea"/>
  <rect x="19.5" y="86.3" width="19" height="1.7" fill="#c4b49a"/>
  <!-- folder -->
  <path d="M18.7,125.7 L25,125.7 L26.5,127.5 L36,127.5 L36,133 L18.7,133Z" fill="#a0aab8"/>
  <rect x="20.5" y="128" width="14" height="4" fill="#dcdcdc"/>
  <rect x="19.3" y="131.7" width="20.7" height="12.3" fill="#80b0e4"/>
  <rect x="19.3" y="131.7" width="20.7" height="1.3" fill="#a9cdf2"/>
  <path d="M26.5,137.5 L30.5,134 L34.5,137.5 L33.5,137.5 L33.5,140.5 L27.5,140.5 L27.5,137.5Z" fill="#fff"/>
  <!-- network -->
  <rect x="17.9" y="189.6" width="7.8" height="15.2" rx="1" fill="#e6e4cc"/>
  <rect x="19" y="193" width="5.5" height="1" fill="#a8a890"/>
  <rect x="19" y="197" width="5.5" height="1" fill="#a8a890"/>
  <rect x="28.5" y="186" width="9.3" height="12.4" fill="#d6dcd6"/>
  <rect x="29.6" y="187.2" width="7" height="7" fill="#7a9ab8"/>
  <rect x="27" y="196" width="3" height="7" fill="#1a2a4a"/>
  <rect x="33.9" y="192" width="8.1" height="10.7" fill="#e0e4e0"/>
  <rect x="35" y="193.2" width="5.9" height="6" fill="#6f98c8"/>
</svg>
<div class="dlabel" style="left:0;top:31px;width:60px">Internet<br>Browser</div>
<div class="dlabel" style="left:0;top:91.7px;width:60px">My<br>Computer</div>
<div class="dlabel" style="left:0;top:150.7px;width:60px">My<br>Documents</div>
<div class="dlabel" style="left:0;top:211.5px;width:60px">My Network</div>

<!-- Paint window -->
<div id="paint" class="abs">
  <div class="body"></div>
  <div class="abs" style="left:3.4px;top:97.4px;width:19.6px;height:18.8px;border:1px solid #6a7888;background:#e6e9ee"></div>
  <div class="ttl">Unnamed - Paint</div>
  <svg class="abs" style="left:0;top:0" width="60" height="200" viewBox="175 34 60 200">
  <g fill="none" stroke="#3a78c8" stroke-width="1.1" stroke-dasharray="1.6 1.1">
    <path d="M184,75 Q188,74 192,78 Q195,81 193,84 L186,84.5 Q182,83 182.5,79 Q183,76 184,75Z"/>
    <rect x="201.5" y="75.2" width="12.2" height="8.5"/>
  </g>
  <path d="M181.5,100.5 L189.5,92.5 Q192.5,91.5 194,94.5 L186.5,103.5 Q183,105 181.5,100.5Z" fill="#e8c440" stroke="#b08a20" stroke-width="0.5"/>
  <path d="M183,102 L186.5,98.5 L188,100 L185.5,103Z" fill="#c09020"/>
  <path d="M203,98 L208,93 L214,99 L208,105Z" fill="#6f94cc" stroke="#3a4a6a" stroke-width="0.8"/>
  <path d="M201,99 Q199.5,102 201,104 Q203,102 203,99Z" fill="#7aa030"/>
  <path d="M208,92 L208,97" stroke="#3a4a6a" stroke-width="0.8"/>
  <path d="M182,125 L189,118 L191,120 L184,126Z" fill="#b8dcf0" stroke="#8aa8c0" stroke-width="0.5"/>
  <path d="M189,118 L193.5,113.5 L195,115 L191,120Z" fill="#333"/>
  <circle cx="206" cy="118.5" r="4" fill="none" stroke="#b0b0c8" stroke-width="1.8"/>
  <path d="M208.5,121.5 L212,125" stroke="#b8b8cc" stroke-width="2.2"/>
  <path d="M182.8,147 L193,136.5 L196,139.3 L185.8,149.8Z" fill="#dca868" stroke="#8a6a40" stroke-width="0.6"/>
  <path d="M193,137 L194.5,135.5 L197,138 L195.5,139Z" fill="#c85050"/>
  <path d="M183,147.5 L185.5,149 L182.3,149.8Z" fill="#333"/>
  <path d="M207.5,140.5 L212.5,135 L215,137.2 L209.5,142.5Z" fill="#d0d0d0" stroke="#555" stroke-width="0.7"/>
  <path d="M207.5,140.5 L209.5,142.5 Q208,147.5 202,147.5 Q204.5,143.5 207.5,140.5Z" fill="#111"/>
  <path d="M182.5,158 L187,154 L193,160 L189,164Z" fill="#4a8ad8"/>
  <path d="M181.5,156.5 Q183,153.5 186,154" stroke="#e8d040" stroke-width="2" fill="none"/>
  <text x="207" y="165" text-anchor="middle" font-family="Liberation Sans" font-weight="bold" font-size="13.5" fill="#5b93d8" stroke="#2f5fa8" stroke-width="0.7">A</text>
  <path d="M182,174 L193.5,185.5" stroke="#555" stroke-width="1.1"/>
  <path d="M208,174.3 Q212.5,175.5 209.5,180 Q205,183.5 208.5,187" stroke="#333" stroke-width="1.2" fill="none"/>
  <rect x="182.3" y="195" width="10" height="7.8" fill="#a9d0f5" stroke="#4a5a70" stroke-width="0.9"/>
  <path d="M203.5,203 L206.5,195.5 L210,195.5 L209,199 L213,199.5 L213,203Z" fill="#a9d0f5" stroke="#4a5a70" stroke-width="0.9"/>
  <ellipse cx="187.3" cy="219" rx="5" ry="3.8" fill="#b8d4f5" stroke="#4a5a70" stroke-width="0.9"/>
  <rect x="202.7" y="215.2" width="10" height="7.6" rx="2" fill="#b8d4f5" stroke="#4a5a70" stroke-width="0.9"/>
</svg>
<svg class="abs" style="left:6px;top:4px" width="12" height="14" viewBox="0 0 12 14">
  <path d="M0.8,0.8 L3,0.8 L5.2,7 L6,4 L7,4 L7.8,7 L9.5,0.8 L11.5,0.8 L8.8,9 L7,9 L6.5,7 L6,9 L3.8,9Z" fill="#6a5c4a" opacity="0.8"/>
  <path d="M9,2 L11,0.8 L10,6 L8.5,8Z" fill="#f0dc80" opacity="0.8"/>
  <path d="M3.5,10.5 L5,10.5 L5,13 L3.5,13Z M6.5,10 L9,10 L8.5,13 L6.5,13Z" fill="#9a9a9a" opacity="0.7"/>
</svg>
  <div class="abs" style="left:387.6px;top:12.8px;width:7.6px;height:1.3px;background:#666"></div>
  <div class="abs" style="left:402px;top:7px;width:8px;height:7px;border:1.2px solid #5a5a5a;border-top-width:1.7px"></div>
  <svg class="abs" style="left:417px;top:5.5px" width="10" height="9" viewBox="0 0 10 9"><path d="M1.5,1.2 L8.5,8 M8.5,1.2 L1.5,8" stroke="#444" stroke-width="1.15"/></svg>
  <div class="menubar">
    <span style="left:4.5px"><u>F</u>ile</span><span style="left:26.6px"><u>E</u>dit</span><span style="left:51px"><u>V</u>iew</span><span style="left:78.2px"><u>I</u>mage</span><span style="left:111.4px"><u>C</u>olors</span><span style="left:144.8px"><u>H</u>elp</span>
  </div>
  <div class="abs" style="left:3px;top:35.3px;width:40px;height:1.2px;background:#c8c8c8"></div>
  <div class="abs" style="left:6.9px;top:201.3px;width:31.7px;height:50.7px;border:1px solid #d0d0d0;border-top-color:#bdbdbd;border-left-color:#bdbdbd"></div>
  <div class="abs" style="left:47.3px;top:42px;width:24.2px;height:24px;border:1px solid #a0a0a0;border-right-color:#fff;border-bottom-color:#fff;background:#f4f4f4"></div>
  <div class="abs" style="left:58px;top:52px;width:12px;height:11.5px;background:#fff;border-right:1px solid #a8a8a8;border-bottom:1px solid #a8a8a8"></div>
  <div class="abs" style="left:52px;top:46.6px;width:11px;height:10.7px;background:#000"></div>
  <div class="sw" style="left:76.50px;top:42.5px;background:#000000"></div><div class="sw" style="left:76.50px;top:54.8px;background:#ffffff"></div><div class="sw" style="left:89.25px;top:42.5px;background:#464646"></div><div class="sw" style="left:89.25px;top:54.8px;background:#dcdcdc"></div><div class="sw" style="left:102.00px;top:42.5px;background:#787878"></div><div class="sw" style="left:102.00px;top:54.8px;background:#b4b4b4"></div><div class="sw" style="left:114.75px;top:42.5px;background:#990030"></div><div class="sw" style="left:114.75px;top:54.8px;background:#9c5a3c"></div><div class="sw" style="left:127.50px;top:42.5px;background:#ed1c24"></div><div class="sw" style="left:127.50px;top:54.8px;background:#ffa3b1"></div><div class="sw" style="left:140.25px;top:42.5px;background:#ff7e00"></div><div class="sw" style="left:140.25px;top:54.8px;background:#e5aa7a"></div><div class="sw" style="left:153.00px;top:42.5px;background:#ffc20e"></div><div class="sw" style="left:153.00px;top:54.8px;background:#f5e49c"></div><div class="sw" style="left:165.75px;top:42.5px;background:#fff200"></div><div class="sw" style="left:165.75px;top:54.8px;background:#fff9bd"></div><div class="sw" style="left:178.50px;top:42.5px;background:#a8e61d"></div><div class="sw" style="left:178.50px;top:54.8px;background:#d3f9bc"></div><div class="sw" style="left:191.25px;top:42.5px;background:#22b14c"></div><div class="sw" style="left:191.25px;top:54.8px;background:#9dbb61"></div><div class="sw" style="left:204.00px;top:42.5px;background:#00b7ef"></div><div class="sw" style="left:204.00px;top:54.8px;background:#99d9ea"></div><div class="sw" style="left:216.75px;top:42.5px;background:#4d6df3"></div><div class="sw" style="left:216.75px;top:54.8px;background:#709ad1"></div><div class="sw" style="left:229.50px;top:42.5px;background:#2f3699"></div><div class="sw" style="left:229.50px;top:54.8px;background:#546d8e"></div><div class="sw" style="left:242.25px;top:42.5px;background:#6f3198"></div><div class="sw" style="left:242.25px;top:54.8px;background:#b5a5d5"></div>
  <div class="abs" style="left:43.3px;top:73.9px;width:386.4px;height:195.5px;background:#808080"></div>
  <div class="abs" style="left:47px;top:77.8px;width:320px;height:191.6px;background:#fff"></div>
  <div class="abs" style="left:44px;top:75px;width:3px;height:3px;background:#fff"></div><div class="abs" style="left:205.5px;top:75px;width:3px;height:3px;background:#fff"></div><div class="abs" style="left:367px;top:75px;width:3px;height:3px;background:#fff"></div><div class="abs" style="left:367px;top:196px;width:3px;height:3px;background:#fff"></div><div class="abs" style="left:44px;top:196px;width:3px;height:3px;background:#fff"></div>
  <div class="abs" style="left:418.7px;top:75.8px;width:11px;height:193.6px;background:#fff"></div>
  <div class="abs" style="left:419.2px;top:87.7px;width:10.2px;height:133.6px;background:#4b9bd9"></div>
  <svg class="abs" style="left:419px;top:77px" width="11" height="192" viewBox="0 0 11 192"><path d="M2.5,6.5 L5.5,3.5 L8.5,6.5Z" fill="#1c75c8"/><path d="M2.5,184.5 L5.5,187.5 L8.5,184.5Z" fill="#1c75c8"/></svg>
  <div class="status">
    <div class="abs" style="left:219px;top:2px;width:1px;height:19px;background:#c8c8c8"></div>
    <div class="abs" style="left:315px;top:2px;width:1px;height:19px;background:#c8c8c8"></div>
    <div class="abs" style="left:223.6px;top:7.3px;font-size:9px;color:#555">44, 18</div>
  </div>
  <svg class="abs" style="left:423px;top:283px" width="9" height="9" viewBox="0 0 9 9"><g fill="#a0a0a0"><rect x="6" y="1" width="1.2" height="1.2"/><rect x="6" y="4" width="1.2" height="1.2"/><rect x="3" y="4" width="1.2" height="1.2"/><rect x="6" y="7" width="1.2" height="1.2"/><rect x="3" y="7" width="1.2" height="1.2"/><rect x="0" y="7" width="1.2" height="1.2"/></g></svg>
</div>

<!-- drawing -->
<svg class="abs" style="left:222px;top:112px" width="320" height="191" viewBox="222 112 320 191">
<g fill="none" stroke="#3a3a3a" stroke-width="1.15" stroke-linejoin="round" stroke-linecap="round">
<path d="M296.5,154.5 Q299.5,151 300,145 L300.5,136 Q302,131.5 307,131 L313,131 Q316.5,132 316.5,137 Q316,141.5 312,142 L304,142 Q301,141 300,139"/>
<path d="M340.5,137.5 Q342.5,143 342.8,150 L343.2,166"/>
<path d="M362,160.5 L376,160.5 Q381,158.5 379.5,155 Q375,147 369,143.5 L365,143 L364.8,160.5 Q369,168 370.5,180"/>
<path d="M397,147.3 L403.5,147.5 Q404.8,143 404,139.5 Q402,136.5 396,136.5 L391,137.5 Q387.5,141 387.6,149 Q388.5,153 392,154.5 Q398,156.5 408,153.5"/>
<path d="M413.5,140.5 Q415.5,149 419.5,153.5 Q423,155 428,154.5 Q432,153 433.5,148 L434.5,144.5 Q431,143.5 429.5,141.5 Q426,138.5 422,138.5 L414,139.5 M434.2,146 Q438,133 439.5,127 L439.8,121.5"/>
<path d="M461,142 Q459,148 459,152 L459,157.5"/>
<path d="M486.8,139 L486.8,152 Q485.5,160 484,165 Q482,167 478.5,172.5 Q476,174.5 470,174.2 L459,173.3"/>
<path d="M513,140 L504,139.6 Q502,140.5 501.5,144 L500.7,150.5 Q503,152 507,152 Q510.5,150.5 512.5,146 M513,139 L513.5,154.5"/>
<path d="M314.6,191.3 Q315.2,194 315.2,197 L315.5,224"/>
<path d="M348.6,197.7 Q350,200 349.5,205 L348.8,215.8 M349.5,201.5 Q353,193 355.5,191.5 Q359,191.5 361,194 Q364,199 367,203 Q369,208 372,218.5 Q375,212 377,209.5 Q378.5,207.5 382,213.5"/>
<path d="M428.4,199.1 L421,199.3 Q416,200.5 415.5,205 Q415.3,209.5 417.5,210.5 L423,210.5 Q426,209 427,205 L428.5,200 M428.8,198 L429,216.5"/>
<path d="M467.1,198.1 L459,198.7 Q455.5,199.5 455.3,204 L455,210.5 Q456,213 459,213 L464,213 Q467,212 468,208.5 Q469.5,203 469,197 Q468.5,193.5 465.5,192.5"/>
</g>
</svg>

<!-- start menu -->
<div id="start" class="abs">
  <div class="side"></div>
  <div class="abs" style="left:155px;top:0;width:1px;height:244px;background:#d4d4d4"></div>
  <div class="smi" style="top:7.3px;letter-spacing:-0.15px;color:#a8a8a8">(Empty)</div>
  <div class="smi" style="top:40px;letter-spacing:-0.22px;"><u>P</u>rogramos</div>
  <div class="smi" style="top:65px;letter-spacing:-0.1px;"><u>D</u>okumentai</div>
  <div class="smi" style="top:90.7px;letter-spacing:-0.11px;"><u>N</u>ustatymai</div>
  <div class="smi" style="top:116.5px;letter-spacing:-0.4px;">Paieš<u>k</u>a</div>
  <div class="smi" style="top:142.3px;letter-spacing:-0.3px;">Pagalba ir palaikymas</div>
  <div class="smi" style="top:168.1px;letter-spacing:-0.16px;"><u>V</u>ykdyti...</div>
  <div class="smi" style="top:199.4px;letter-spacing:-0.5px;">Atjungti SYSTEM...</div>
  <div class="smi" style="top:224.8px;letter-spacing:-0.13px;"><u>I</u>šjungti...</div>
  <div class="abs" style="left:21px;top:28.8px;width:131px;height:1px;background:#b8b8b8"></div>
  <div class="abs" style="left:21px;top:188.3px;width:131px;height:1px;background:#b8b8b8"></div>
  <svg class="abs" style="left:0;top:0" width="156" height="244" viewBox="0 214 156 244">
    <path d="M147.5,256.5 L151,260 L147.5,263.5Z M147.5,282 L151,285.5 L147.5,289Z M147.5,307.5 L151,311 L147.5,314.5Z" fill="#111"/>
    <!-- programs folder -->
    <path d="M25,252.5 L30.5,252.5 L32,254.3 L39,254.3 L39,266 L25,266Z" fill="#a6a6a6"/>
    <rect x="24.8" y="256.3" width="16.2" height="11" rx="1" fill="#5b8fd0"/>
    <rect x="24.8" y="256.3" width="16.2" height="1.5" fill="#8db4e6"/>
    <rect x="27" y="259.2" width="12" height="6.3" fill="#f6f6f6"/>
    <rect x="27" y="259.2" width="12" height="1.3" fill="#4a7cc0"/>
    <circle cx="29.8" cy="262.8" r="1.7" fill="#e8402a"/>
    <rect x="33" y="262" width="4.5" height="0.8" fill="#bbb"/><rect x="33" y="263.8" width="4.5" height="0.8" fill="#bbb"/>
    <!-- documents -->
    <circle cx="33.4" cy="286.3" r="6.9" fill="#fbfbfb" stroke="#3b72bb" stroke-width="2.1"/>
    <path d="M30,289.5 L33.4,286 L36.8,289.5" fill="none" stroke="#5a5a5a" stroke-width="1.4"/>
    <path d="M38,281 Q36,277.3 31.5,277.6 L30.5,275.5 L25.5,280.5 L31.5,282.6 L31,280.3 Q34.5,280 36,282.5Z" fill="#7ab03a"/>
    <!-- settings folder -->
    <path d="M25,303.5 L31,303.5 L32.5,305.5 L39,305.5 L39,317 L25,317Z" fill="#9a9a9a"/>
    <rect x="25" y="307" width="16" height="11" rx="1" fill="#5a8fd0"/>
    <path d="M31,309 L39.5,318.5 M38,309 L31,316.5" stroke="#d8d8d8" stroke-width="1.8"/>
    <circle cx="31.5" cy="317" r="1.6" fill="#3d6fb0"/>
    <!-- search -->
    <circle cx="30.7" cy="333.5" r="5.8" fill="#bcd6f2" stroke="#9a9a9a" stroke-width="1.6"/>
    <path d="M34.8,338 L40.2,343.5" stroke="#8a8a8a" stroke-width="2.2" stroke-linecap="round"/>
    <!-- help -->
    <circle cx="32.5" cy="361.8" r="7.6" fill="#3f74bd"/>
    <circle cx="32.5" cy="361.8" r="6.2" fill="none" stroke="#a9c6ea" stroke-width="0.8"/>
    <text x="32.5" y="366" text-anchor="middle" font-family="Liberation Sans" font-weight="bold" font-size="10" fill="#fff">?</text>
    <!-- run gears -->
    <rect x="26" y="378.5" width="6" height="6" rx="1" fill="#f4f4f4" stroke="#7a7a7a" stroke-width="1.4" stroke-dasharray="1.5 0.8"/>
    <rect x="24.8" y="387" width="6" height="6" rx="1" fill="#f4f4f4" stroke="#7a7a7a" stroke-width="1.4" stroke-dasharray="1.5 0.8"/>
    <circle cx="36.5" cy="386.5" r="4.6" fill="#8a8a8a" stroke="#6a6a6a" stroke-width="1.6" stroke-dasharray="1.3 0.9"/>
    <circle cx="36.5" cy="386.5" r="1.6" fill="#d0d0d0"/>
    <!-- logoff -->
    <defs><linearGradient id="door" x1="0" x2="1"><stop offset="0" stop-color="#6a6a6a"/><stop offset="0.5" stop-color="#a8b8b0"/><stop offset="1" stop-color="#f4f4f4"/></linearGradient></defs>
    <rect x="25.3" y="411.8" width="10.2" height="16" fill="url(#door)" stroke="#5a5a5a" stroke-width="0.8"/>
    <path d="M34.5,419.8 L37.8,416.5 L37.8,418 L41.5,418 L41.5,421.6 L37.8,421.6 L37.8,423.1Z" fill="#d41c1c"/>
    <!-- shutdown -->
    <rect x="25.8" y="436.5" width="15" height="15" rx="2.5" fill="#f6f6f6" stroke="#8a8a8a" stroke-width="1"/>
    <rect x="30.8" y="439.5" width="5" height="8.5" rx="1" fill="#2a2a2a"/>
    <rect x="31.8" y="444" width="3" height="3" fill="#e0e0e0"/>
  </svg>
  <div class="abs rtxt">ReactOS</div>
  <svg class="abs" style="left:2px;top:226px" width="15" height="16" viewBox="0 0 15 16">
    <path d="M7.5,1.8 Q8.5,1.8 9.5,2.8 L12.6,6.2 Q13.4,7.2 12.6,8.2 L9.2,12 Q7.5,13.6 5.8,12 L2.4,8.2 Q1.6,7.2 2.4,6.2 L5.5,2.8 Q6.5,1.8 7.5,1.8Z" fill="#fff" transform="rotate(-20 7.5 7.5)"/>
    <path d="M2.5,11 L6,14.5 M12.8,9.5 L9.5,14" stroke="#dce6f4" stroke-width="1.2" stroke-linecap="round"/>
  </svg>
</div>

<!-- wallpaper text -->
<div class="wtxt" style="top:406.5px;letter-spacing:-0.16px">ReactOS Version 0.4.15-x86</div>
<div class="wtxt" style="top:418px;letter-spacing:-0.24px">Build 20250321-0.4.15-release-0-g22fb3bb.GNU_8.4.0</div>
<div class="wtxt" style="top:429.7px;letter-spacing:-0.3px">Reporting NT 5.2 (Build 3790: Service Pack 2)</div>
<div class="wtxt" style="top:441.3px;letter-spacing:-0.35px">X:\reactos</div>

<svg class="abs" style="left:296px;top:382px" width="12" height="18" viewBox="0 0 12 18">
  <path d="M1,1 L1,14 L4,11 L6.5,16.5 L8.5,15.5 L6,10.5 L10,10.5Z" fill="#fff" stroke="#111" stroke-width="0.9" stroke-linejoin="round"/>
</svg>
<!-- taskbar -->
<div id="taskbar" class="abs">
  <div class="abs" style="left:0;top:1px;width:33.5px;height:20px;background:#1b3053"></div>
  <svg class="abs" style="left:0;top:0" width="34" height="21" viewBox="0 458 34 21">
    <circle cx="17" cy="468.8" r="8" fill="none" stroke="#56708f" stroke-width="0.9" opacity="0.75"/>
    <path d="M17,462.3 Q21.5,462.6 22.8,466 Q22.8,467.2 21.8,468.3 L17.8,472.3 Q17,473 16.2,472.3 L12.2,468.3 Q11.2,467.2 11.2,466 Q12.5,462.6 17,462.3Z" fill="#fff"/>
    <path d="M11.2,470.5 L15,475.5 M22.8,470.5 L19,475.5" stroke="#f0f0f0" stroke-width="1.7" stroke-linecap="round"/>
  </svg>
  <div class="abs" style="left:33.5px;top:1px;width:144.5px;height:20px;background:#064f8c"></div>
  <div class="abs" style="left:37px;top:19px;width:131.75px;height:2px;background:#5ea8e6"></div>
  <svg class="abs" style="left:38px;top:5px" width="16" height="14" viewBox="0 0 16 14">
    <path d="M7.8,8.2 L12.8,1.5 L15.2,3.2 L10.2,10Z" fill="#e0e0e0"/>
    <path d="M12.8,1.5 L13.8,0.3 L16,1.9 L15.2,3.2Z" fill="#d88a30"/>
    <path d="M7.8,8.2 L10.2,10 Q8,13.8 3.5,13.8 Q6,11.5 7.8,8.2Z" fill="#111"/>
  </svg>
  <div class="abs tbt">Unnamed - Paint</div>
  <div class="abs" style="left:508px;top:1px;width:120px;height:20px;background:#0c3764"></div>
  <svg class="abs" style="left:508px;top:0" width="120" height="21" viewBox="508 458 120 21">
    <path d="M518,467.5 L520.5,467.5 L523.5,464.5 L523.5,474 L520.5,471 L518,471Z" fill="#d8dde4"/>
    <path d="M525.5,466.5 Q527,469.2 525.5,472 M528,465.5 Q530.2,469.2 528,473" fill="none" stroke="#3a7ac8" stroke-width="1"/>
    <rect x="536" y="466.5" width="9" height="8" fill="#e6ece4"/>
    <rect x="537" y="468" width="7" height="4.5" fill="#80b050"/>
    <path d="M532.5,465 L537,461.5 L537,463.5 L541,463.5 L541,466.5 L537,466.5 L537,468.5Z" fill="#4aa830"/>
    <path d="M553.5,462 L555.5,463 L554,467" stroke="#ddd" stroke-width="1" fill="none"/>
    <path d="M549.5,474 Q549.5,468 554,467 Q558.5,468 558.5,474Z" fill="#e8e8e8"/>
    <rect x="549.5" y="472" width="9" height="2" fill="#b0b0b0"/>
    <rect x="566" y="463" width="8" height="7" fill="#d8dde8"/>
    <rect x="567" y="464" width="6" height="4.5" fill="#3a64b8"/>
    <rect x="561.5" y="467" width="8" height="7" fill="#d8dde8"/>
    <rect x="562.5" y="468" width="6" height="4.5" fill="#3a64b8"/>
    <rect x="562" y="474" width="7" height="1.3" fill="#ccc"/>
    <rect x="575.5" y="462.3" width="12.7" height="12.7" fill="#f2f2f2"/>
    <text x="581.9" y="472.3" text-anchor="middle" font-family="Liberation Sans" font-weight="bold" font-size="8" fill="#111">LT</text>
  </svg>
  <div class="abs clk">11:34</div>
</div>
</body></html>
